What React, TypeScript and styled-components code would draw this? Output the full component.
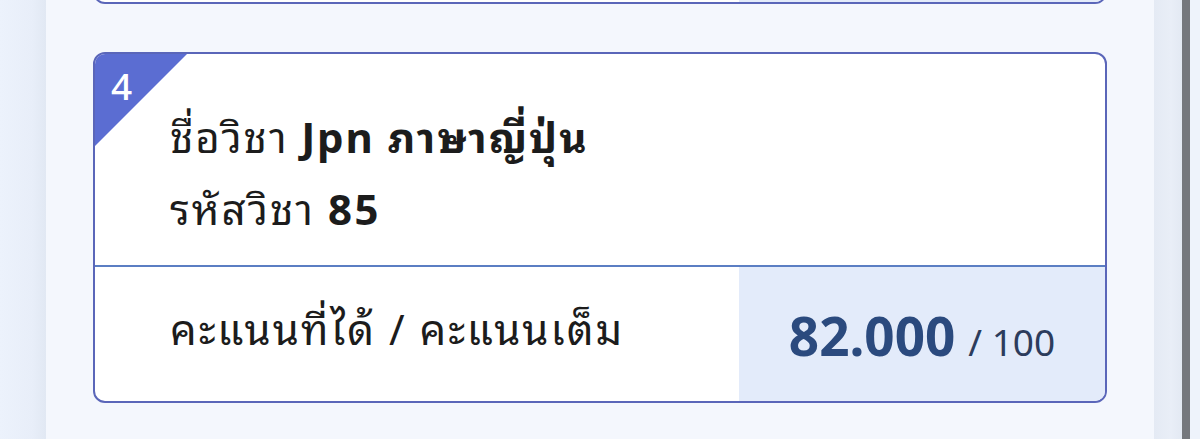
import styled, { createGlobalStyle } from 'styled-components';

const GlobalStyle = createGlobalStyle`
  html, body {
    margin: 0;
    padding: 0;
    height: 100%;
    overflow: hidden;
  }
  body {
    font-family: "Noto Sans Thai Looped", "Noto Sans Thai", "Noto Sans", "Open Sans", sans-serif;
    color: #1c1c1c;
  }
  #root {
    height: 100%;
  }
`;

const Shell = styled.div`
  display: grid;
  grid-template-columns: 46px 1fr 28px 8px 10px;
  height: 439px;
`;

const SideRail = styled.div`
  background: linear-gradient(90deg, #ecf2fc 0%, #e8eef9 70%, #e1e8f3 100%);
`;

const RightRail = styled.div`
  background: linear-gradient(90deg, #e4eaf4 0%, #e9eef7 60%, #e3e9f3 100%);
`;

const ScrollThumb = styled.div`
  background: #75787d;
`;

const Edge = styled.div`
  background: #eef3fb;
`;

const Main = styled.main`
  background: #f4f7fd;
  overflow: hidden;
  padding: 0 47px;
`;

// the list is scrolled, so only the bottom edge of the previous card shows
const CardList = styled.div<{ $offset: number }>`
  display: flex;
  flex-direction: column;
  gap: 48px;
  margin-top: ${({ $offset }) => -$offset}px;
`;

const Card = styled.section`
  position: relative;
  background: #fff;
  border: 2px solid #5a66b9;
  border-radius: 12px;
  overflow: hidden;
`;

const Corner = styled.div`
  position: absolute;
  top: 0;
  left: 0;
  width: 92px;
  height: 92px;
  background: #5b6dd2;
  clip-path: polygon(0 0, 100% 0, 0 100%);
`;

const CornerNumber = styled.span`
  position: absolute;
  top: 13px;
  left: 16px;
  color: #fff;
  font-family: "Noto Sans", "Open Sans", sans-serif;
  font-size: 37px;
  font-weight: 500;
  line-height: 1;
`;

const Info = styled.div`
  padding: 44px 24px 23px 75px;
  border-bottom: 2px solid #5b7ec3;
`;

const InfoLine = styled.div`
  font-size: 42px;
  line-height: 72px;
  letter-spacing: 2px;
  b {
    font-weight: 700;
  }
`;

const ScoreRow = styled.div`
  display: grid;
  grid-template-columns: 1fr 366px;
  height: 134px;
`;

const ScoreLabel = styled.div`
  display: flex;
  align-items: center;
  padding: 0 0 16px 75px;
  font-size: 42px;
  letter-spacing: 2px;
`;

const ScoreCell = styled.div`
  display: flex;
  align-items: baseline;
  justify-content: center;
  padding-top: 32px;
  background: #e3ebfa;
  font-family: "Noto Sans", "Open Sans", sans-serif;
`;

const ScoreValue = styled.span`
  font-size: 53px;
  font-weight: 700;
  color: #2b4a7e;
`;

const ScoreMax = styled.span`
  margin-left: 13px;
  font-size: 37px;
  color: #2c3c5c;
`;

interface Subject {
  no: number;
  name: string;
  code: string;
  score: number;
  full: number;
}

const subjects: Subject[] = [
  { no: 3, name: 'Eng ภาษาอังกฤษ', code: '84', score: 75, full: 100 },
  { no: 4, name: 'Jpn ภาษาญี่ปุ่น', code: '85', score: 82, full: 100 },
];

const SubjectCard = ({ subject }: { subject: Subject }) => (
  <Card>
    <Corner />
    <CornerNumber>{subject.no}</CornerNumber>
    <Info>
      <InfoLine>
        ชื่อวิชา <b>{subject.name}</b>
      </InfoLine>
      <InfoLine>
        รหัสวิชา <b>{subject.code}</b>
      </InfoLine>
    </Info>
    <ScoreRow>
      <ScoreLabel>คะแนนที่ได้ / คะแนนเต็ม</ScoreLabel>
      <ScoreCell>
        <ScoreValue>{subject.score.toFixed(3)}</ScoreValue>
        <ScoreMax>/ {subject.full}</ScoreMax>
      </ScoreCell>
    </ScoreRow>
  </Card>
);

export default function App() {
  return (
    <>
      <GlobalStyle />
      <Shell>
        <SideRail />
        <Main>
          <CardList $offset={347}>
            {subjects.map((s) => (
              <SubjectCard key={s.no} subject={s} />
            ))}
          </CardList>
        </Main>
        <RightRail />
        <ScrollThumb />
        <Edge />
      </Shell>
    </>
  );
}
